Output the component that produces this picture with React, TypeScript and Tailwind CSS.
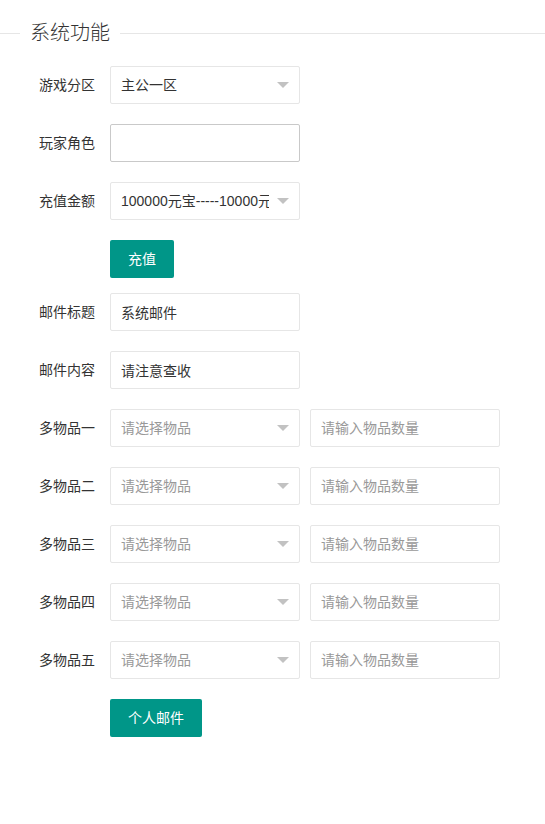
import React from "react";

const font = "font-['Liberation_Sans','Noto_Sans_CJK_SC',sans-serif]";

function Label({ children }: { children: React.ReactNode }) {
  return (
    <label className="w-[110px] shrink-0 px-[15px] py-[9px] text-right text-[14px] leading-[20px] text-[#333]">
      {children}
    </label>
  );
}

function TextInput({ value, placeholder, dark }: { value?: string; placeholder?: string; dark?: boolean }) {
  return (
    <input
      readOnly
      defaultValue={value}
      placeholder={placeholder}
      className={`h-[38px] w-[190px] rounded-[2px] border bg-white pl-[10px] text-[14px] text-[#333] outline-none placeholder:text-[#999] ${font} ${
        dark ? "border-[#c9c9c9]" : "border-[#e6e6e6]"
      }`}
    />
  );
}

function Select({ value, placeholder }: { value?: string; placeholder?: string }) {
  return (
    <div className="relative h-[38px] w-[190px] rounded-[2px] border border-[#e6e6e6] bg-white pl-[10px] pr-[30px]">
      <div
        className={`h-full overflow-hidden whitespace-nowrap text-[14px] leading-[36px] ${
          value ? "text-[#333]" : "text-[#999]"
        }`}
      >
        {value ?? placeholder}
      </div>
      <span className="absolute right-[10px] top-1/2 -mt-[3px] h-0 w-0 border-x-[6px] border-t-[6px] border-x-transparent border-t-[#c2c2c2]" />
    </div>
  );
}

function Row({ label, children }: { label: string; children: React.ReactNode }) {
  return (
    <div className="mb-5 flex items-start">
      <Label>{label}</Label>
      <div className="flex gap-[10px]">{children}</div>
    </div>
  );
}

function Button({ children, className }: { children: React.ReactNode; className?: string }) {
  return (
    <div className={`flex pl-[110px] ${className ?? ""}`}>
      <button className="h-[38px] rounded-[2px] bg-[#009688] px-[18px] text-[14px] leading-[38px] text-white">
        {children}
      </button>
    </div>
  );
}

const items = ["一", "二", "三", "四", "五"];

export default function App() {
  return (
    <div className={`min-h-screen bg-white ${font}`}>
      <div className="mt-[23px] flex h-[21px] items-center">
        <div className="h-px w-5 bg-[#e6e6e6]" />
        <span className="px-[10px] text-[20px] font-light leading-[21px] text-[#333]">系统功能</span>
        <div className="h-px flex-1 bg-[#e6e6e6]" />
      </div>

      <form className="mt-[22px]">
        <Row label="游戏分区">
          <Select value="主公一区" />
        </Row>
        <Row label="玩家角色">
          <TextInput dark />
        </Row>
        <Row label="充值金额">
          <Select value="100000元宝-----10000元" />
        </Row>
        <Button className="mb-[15px]">充值</Button>

        <Row label="邮件标题">
          <TextInput value="系统邮件" />
        </Row>
        <Row label="邮件内容">
          <TextInput value="请注意查收" />
        </Row>
        {items.map((n) => (
          <Row key={n} label={`多物品${n}`}>
            <Select placeholder="请选择物品" />
            <TextInput placeholder="请输入物品数量" />
          </Row>
        ))}
        <Button>个人邮件</Button>
      </form>
    </div>
  );
}
